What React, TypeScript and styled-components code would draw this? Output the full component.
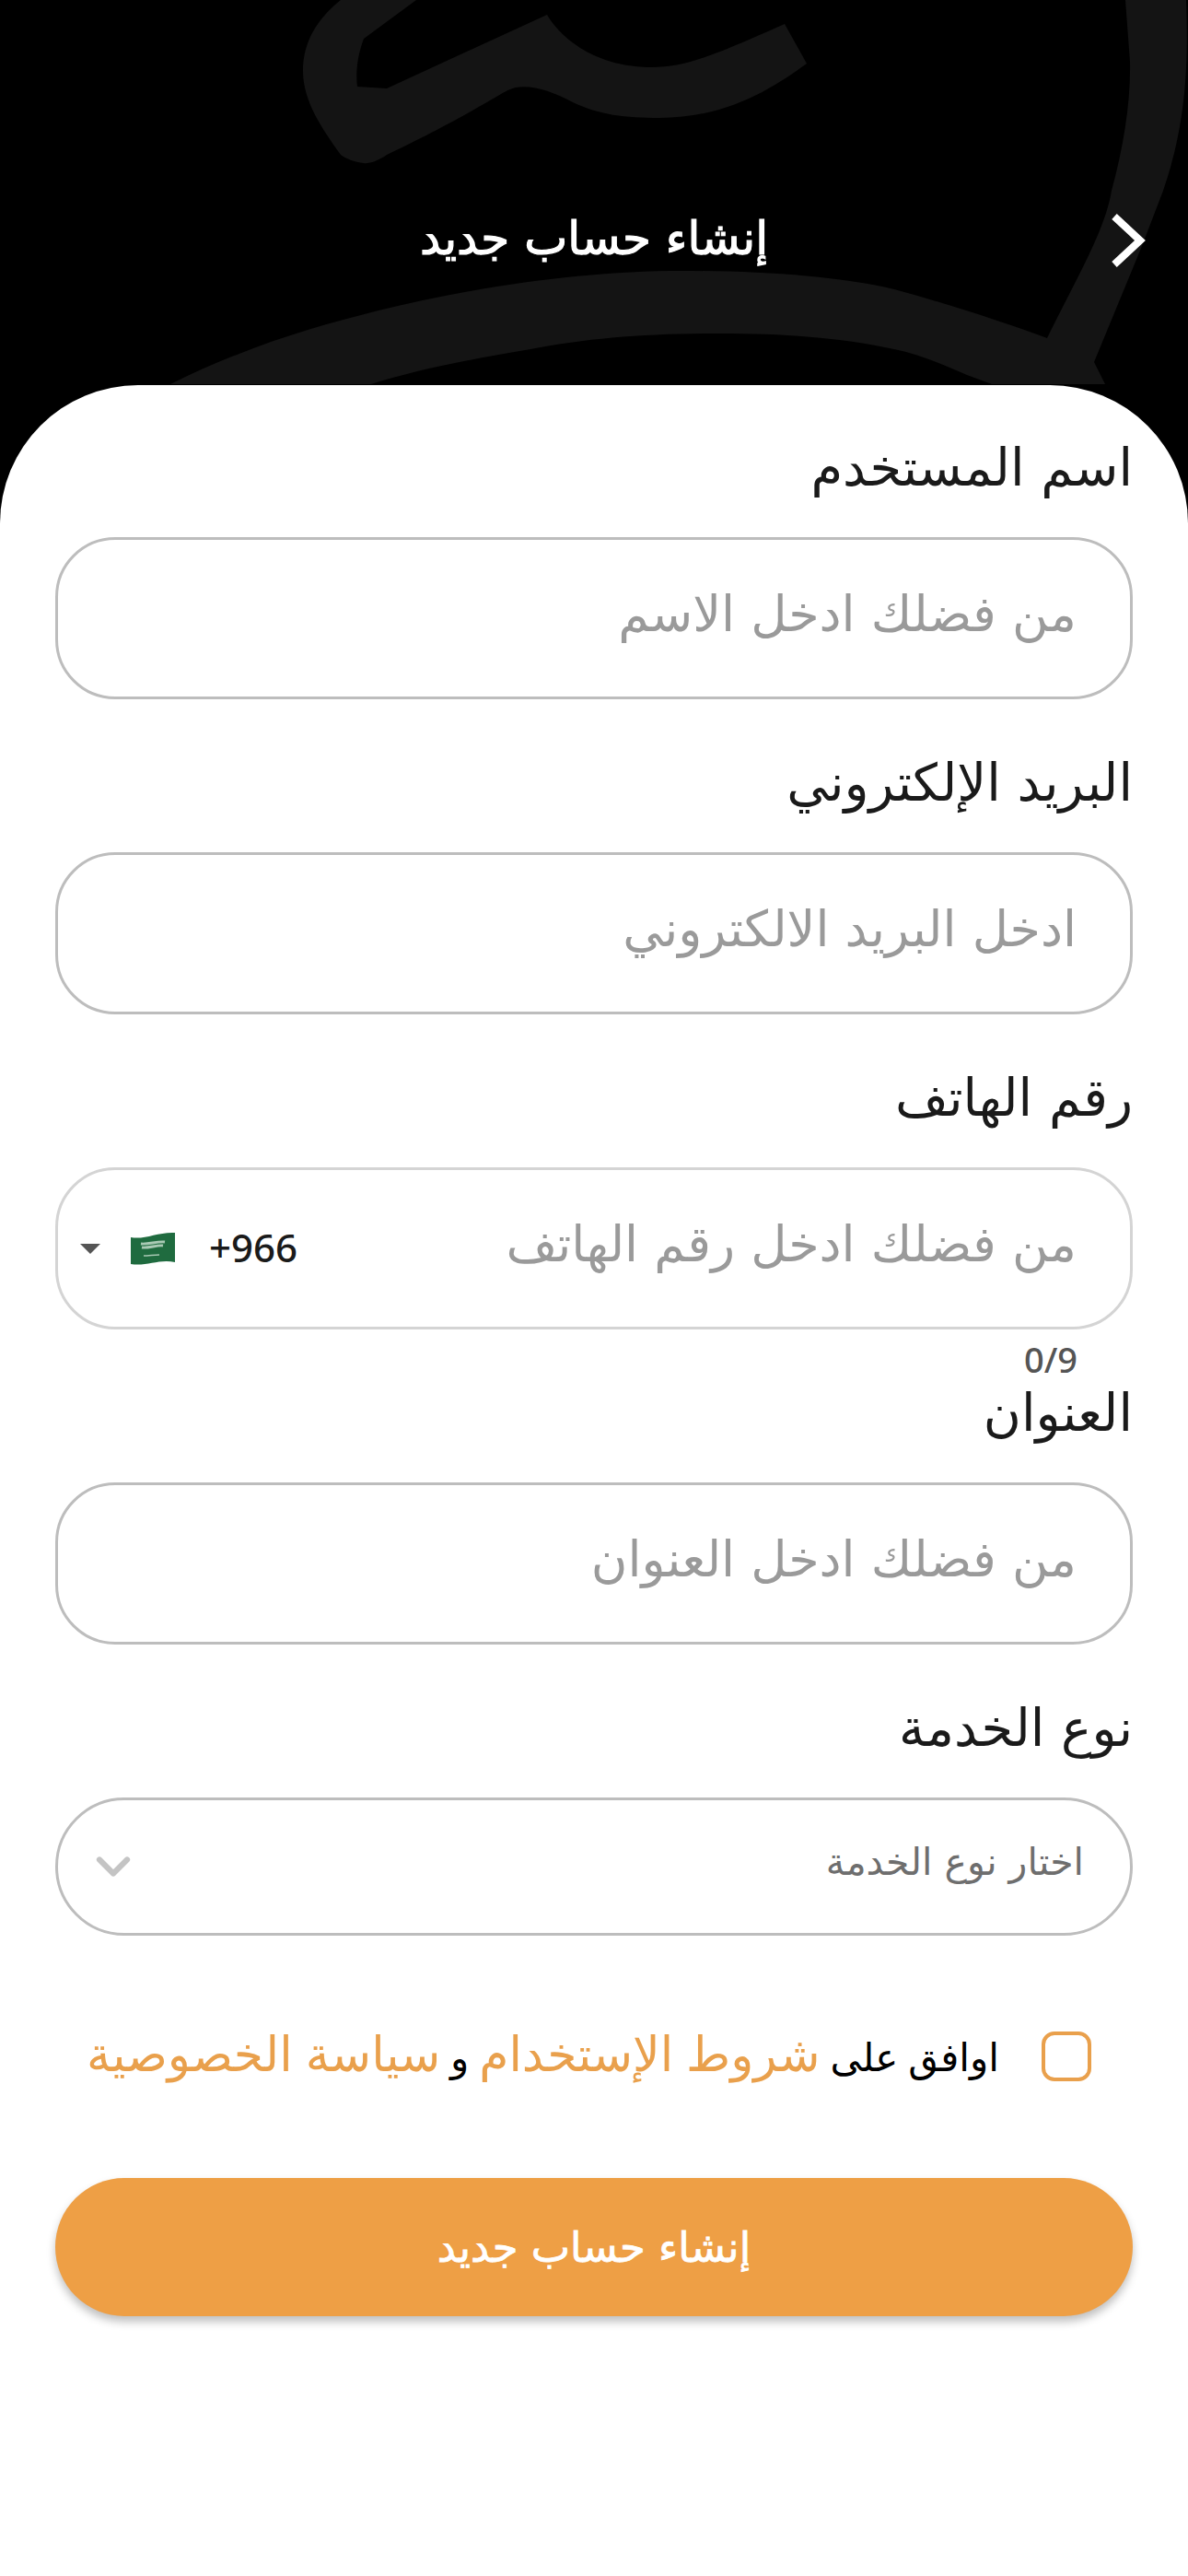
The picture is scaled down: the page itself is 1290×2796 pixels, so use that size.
import styled, { createGlobalStyle } from "styled-components";
import { ChevronDown } from "lucide-react";

const Global = createGlobalStyle`
  html, body {
    margin: 0;
    padding: 0;
    background: #fff;
  }
  * {
    box-sizing: border-box;
  }
`;

const Page = styled.div`
  position: relative;
  width: 1290px;
  height: 2796px;
  background: #000;
  overflow: hidden;
  direction: rtl;
  font-family: "DejaVu Sans", "Noto Sans", sans-serif;
`;

const Backdrop = styled.svg`
  position: absolute;
  top: 0;
  left: 0;
`;

const Header = styled.header`
  position: relative;
  height: 418px;
  padding: 0 45px 0 89px;
  display: flex;
  align-items: flex-start;
  color: #fff;
`;

const BackIcon = styled.svg`
  margin-top: 230px;
  flex: none;
`;

const HeaderTitle = styled.h1`
  flex: 1;
  margin: 226px 0 0 0;
  font-size: 50px;
  line-height: 66px;
  font-weight: 400;
  -webkit-text-stroke: 1.2px #fff;
  text-align: center;
`;

const Sheet = styled.main`
  position: relative;
  height: 2378px;
  background: #fff;
  border-radius: 150px 150px 0 0;
  padding: 57px 60px 0;
  display: flex;
  flex-direction: column;
`;

const Field = styled.div<{ $last?: boolean }>`
  height: ${(props) => (props.$last ? "auto" : "342px")};
  flex: none;
`;

const Label = styled.label`
  display: block;
  height: 108px;
  font-size: 56px;
  line-height: 66px;
  color: #1a1a1a;
`;

const InputBox = styled.div`
  position: relative;
  height: 176px;
  border: 3px solid #bdbdbd;
  border-radius: 65px;
  padding: 0 58px;
  display: flex;
  align-items: center;
  font-size: 54px;
  color: #9a9a9a;
`;

const Placeholder = styled.span`
  flex: 1;
  margin-top: -10px;
`;

const PhoneBox = styled(InputBox)`
  border-color: #d4d4d4;
`;

const Dial = styled.div`
  direction: ltr;
  display: flex;
  align-items: center;
  margin-left: -34px;
  color: #1a1a1a;
  font-size: 42px;
  font-weight: 500;
  font-family: "Noto Sans", sans-serif;
`;

const DialCode = styled.span`
  margin-top: -4px;
`;

const Caret = styled.i`
  width: 0;
  height: 0;
  border-left: 11px solid transparent;
  border-right: 11px solid transparent;
  border-top: 11px solid #555;
  margin-right: 32px;
`;

const Flag = styled.svg`
  margin-right: 36px;
`;

const Counter = styled.div`
  margin: 12px 60px 0 0;
  font-size: 38px;
  font-weight: 500;
  line-height: 40px;
  color: #555;
  direction: ltr;
  text-align: right;
  width: fit-content;
  font-family: "Noto Sans", sans-serif;
`;

const SelectBox = styled(InputBox)`
  height: 150px;
  border-radius: 75px;
  padding: 0 50px 0 30px;
  font-size: 41px;
  color: #6e6e6e;
`;

const SelectChevron = styled(ChevronDown)`
  color: #c4c4c4;
  flex: none;
`;

const Agree = styled.div`
  margin-top: 101px;
  padding: 0 45px 0 0;
  display: flex;
  align-items: center;
  gap: 46px;
  font-size: 42px;
  color: #000;
`;

const Check = styled.span`
  width: 54px;
  height: 54px;
  flex: none;
  border: 4px solid #e9a04c;
  border-radius: 14px;
`;

const AgreeText = styled.p`
  margin: 0;
  white-space: nowrap;
  line-height: 56px;
  word-spacing: -2.5px;
`;

const Accent = styled.span`
  color: #e9a04c;
  font-size: 52px;
`;

const Submit = styled.button`
  margin-top: 102px;
  height: 150px;
  border: 0;
  border-radius: 75px;
  background: #ee9f45;
  color: #fff;
  font: 400 45px "DejaVu Sans", sans-serif;
  -webkit-text-stroke: 0.8px #fff;
  box-shadow: 0 6px 10px rgba(0, 0, 0, 0.25);
`;

export default function App() {
  return (
    <>
      <Global />
      <Page>
        <Backdrop width="1290" height="418" viewBox="0 0 1290 418">
          <path
            d="M370 0H452L395 42C388 60 386 80 388 94L420 96L594 16C605 35 640 73 708 73C745 73 775 60 852 26L876 69C840 95 790 128 716 128C680 128 650 125 620 110C600 100 580 92 560 95C545 98 530 115 420 168C410 175 400 178 395 177C385 176 375 172 370 168C350 140 329 110 329 77C329 45 345 20 370 0Z"
            fill="#141414"
          />
          <path
            d="M185 417C270 375 340 355 411 337C520 310 640 294 740 294C830 294 910 300 971 314C1030 330 1090 350 1137 367C1170 300 1200 250 1207 207C1220 160 1228 110 1227 67L1222 0H1288C1290 60 1290 130 1263 207L1240 267L1188 393L1200 417H1077L1050 407C1030 398 1000 385 971 379C910 366 850 362 782 362C700 362 640 367 576 379C510 390 450 402 403 417Z"
            fill="#141414"
          />
        </Backdrop>
        <Header>
          <BackIcon width="44" height="62" viewBox="0 0 44 62">
            <path d="M9 5L37 31L9 57" fill="none" stroke="#fff" strokeWidth="8" />
          </BackIcon>
          <HeaderTitle>إنشاء حساب جديد</HeaderTitle>
        </Header>
        <Sheet>
          <Field>
            <Label>اسم المستخدم</Label>
            <InputBox>
              <Placeholder>من فضلك ادخل الاسم</Placeholder>
            </InputBox>
          </Field>
          <Field>
            <Label>البريد الإلكتروني</Label>
            <InputBox>
              <Placeholder>ادخل البريد الالكتروني</Placeholder>
            </InputBox>
          </Field>
          <Field>
            <Label>رقم الهاتف</Label>
            <PhoneBox>
              <Placeholder>من فضلك ادخل رقم الهاتف</Placeholder>
              <Dial>
                <Caret />
                <Flag width="50" height="36" viewBox="0 0 50 36">
                  <path d="M1 6C16 9 30 0 49 1V33C32 29 18 38 1 35Z" fill="#1f6b3f" />
                  <path d="M12 13C20 14 30 10 38 11M13 17C20 18 30 14 36 15" stroke="#a9c9b4" strokeWidth="3" fill="none" />
                  <path d="M15 26C20 26 27 25 32 25" stroke="#a9c9b4" strokeWidth="1.5" fill="none" />
                </Flag>
                <DialCode>+966</DialCode>
              </Dial>
            </PhoneBox>
            <Counter>0/9</Counter>
          </Field>
          <Field>
            <Label>العنوان</Label>
            <InputBox>
              <Placeholder>من فضلك ادخل العنوان</Placeholder>
            </InputBox>
          </Field>
          <Field $last>
            <Label>نوع الخدمة</Label>
            <SelectBox>
              <Placeholder>اختار نوع الخدمة</Placeholder>
              <SelectChevron size={60} strokeWidth={2.5} />
            </SelectBox>
          </Field>
          <Agree>
            <Check />
            <AgreeText>
              اوافق على <Accent>شروط الإستخدام</Accent> و <Accent>سياسة الخصوصية</Accent>
            </AgreeText>
          </Agree>
          <Submit>إنشاء حساب جديد</Submit>
        </Sheet>
      </Page>
    </>
  );
}
